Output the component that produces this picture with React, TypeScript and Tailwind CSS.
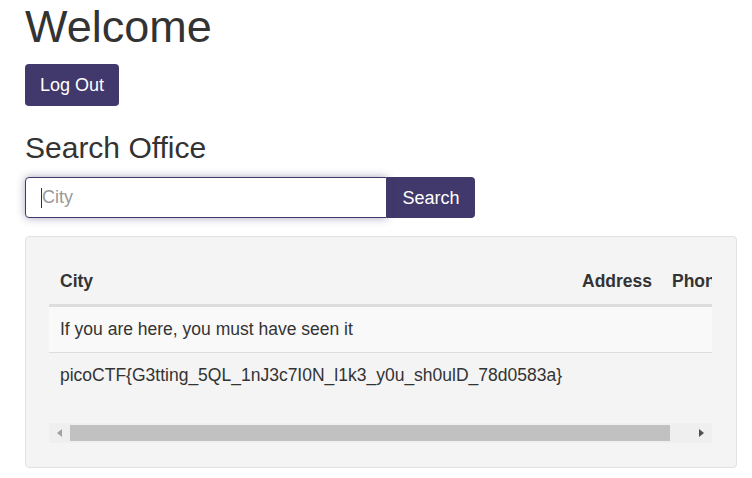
import React from 'react';

const rows = [
  { city: 'If you are here, you must have seen it', address: '', phone: '' },
  { city: 'picoCTF{G3tting_5QL_1nJ3c7I0N_l1k3_y0u_sh0ulD_78d0583a}', address: '', phone: '' },
];

export default function App() {
  return (
    <div className="min-h-[478px] bg-white pl-[25px] pr-[15px] font-['Liberation_Sans',Arial,sans-serif] text-[#333]">
      <h1 className="mt-[3px] text-[45px] font-normal leading-[48px]">Welcome</h1>

      <button
        type="button"
        className="mt-[13px] rounded-[4px] bg-[#41396b] px-[15px] py-[10px] text-[18px] leading-[22px] text-white"
      >
        Log Out
      </button>

      <h2 className="mt-[25px] text-[30px] font-normal leading-[33px]">Search Office</h2>

      <div className="mt-[13px] flex w-[450px]">
        <div className="relative flex-1">
          <input
            type="text"
            placeholder="City"
            className="h-[41px] w-full rounded-l-[4px] border border-[#41396b] bg-white pl-[16px] text-[18px] shadow-[0_0_8px_rgba(65,57,107,0.45)] outline-none placeholder:text-[#999]"
          />
          <span className="absolute left-[16px] top-[11px] h-[20px] w-px bg-[#333]" />
        </div>
        <button
          type="button"
          className="h-[41px] w-[88px] rounded-r-[4px] bg-[#41396b] text-[18px] leading-[22px] text-white"
        >
          Search
        </button>
      </div>

      <div className="mt-[18px] rounded-[4px] border border-[#e3e3e3] bg-[#f4f4f4] px-[23px] pt-[22px] pb-[24px]">
        <div className="w-[663px] overflow-hidden">
          <div className="w-[760px] text-[17.5px]">
            <div className="flex h-[47px] items-center border-b-2 border-[#ddd] font-bold">
              <div className="w-[521px] pl-[11px]">City</div>
              <div className="w-[90px] pl-[12px]">Address</div>
              <div className="pl-[12px]">Phone</div>
            </div>
            {rows.map((r, i) => (
              <div
                key={i}
                className={`flex h-[46px] items-center border-t border-[#ddd] ${i % 2 === 0 ? 'bg-[#f9f9f9]' : ''}`}
              >
                <div className="w-[521px] whitespace-nowrap pl-[11px]">{r.city}</div>
                <div className="w-[90px] pl-[12px]">{r.address}</div>
                <div className="pl-[12px]">{r.phone}</div>
              </div>
            ))}
          </div>
        </div>

        {/* horizontal scrollbar */}
        <div className="mt-[25px] flex h-[20px] w-[663px] items-center bg-[#efefef]">
          <div className="flex w-[21px] justify-center">
            <span className="h-0 w-0 border-y-[4.5px] border-r-[5px] border-y-transparent border-r-[#a3a3a3]" />
          </div>
          <div className="h-[16px] w-[600px] bg-[#c1c1c1]" />
          <div className="flex flex-1 justify-end pr-[8px]">
            <span className="h-0 w-0 border-y-[4.5px] border-l-[5px] border-y-transparent border-l-[#505050]" />
          </div>
        </div>
      </div>
    </div>
  );
}
